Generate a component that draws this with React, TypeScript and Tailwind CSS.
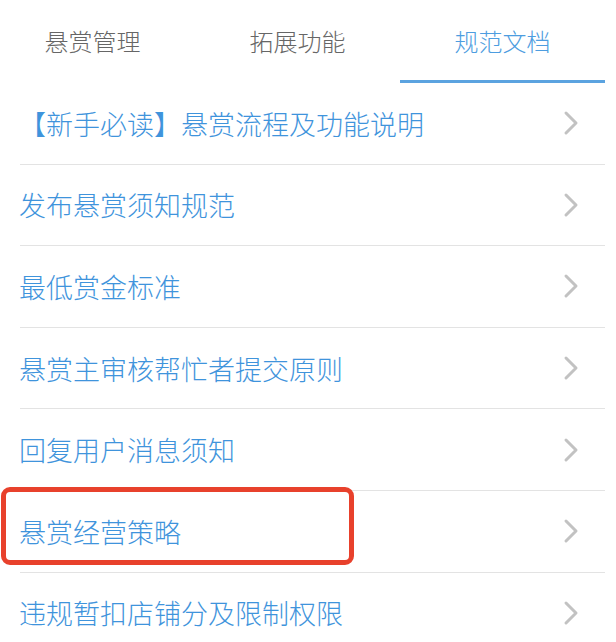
import { ChevronRight } from "lucide-react";

const tabs = ["悬赏管理", "拓展功能", "规范文档"];

const docs = [
  "【新手必读】悬赏流程及功能说明",
  "发布悬赏须知规范",
  "最低赏金标准",
  "悬赏主审核帮忙者提交原则",
  "回复用户消息须知",
  "悬赏经营策略",
  "违规暂扣店铺分及限制权限",
];

export default function App() {
  return (
    <div className="w-[616px] h-[642px] overflow-hidden bg-white font-['Noto_Sans_CJK_SC','Noto_Sans',sans-serif]">
      <div className="w-[605px]">
        {/* tab bar */}
        <div className="-ml-[10px] w-[615px] h-[83px] grid grid-cols-3">
          {tabs.map((t, i) => (
            <div key={t} className="relative flex items-center justify-center pb-[1px]">
              <span
                className={
                  i === 2
                    ? "text-[24px] font-light text-[#4d9de0]"
                    : "text-[24px] font-light text-[#666666]"
                }
              >
                {t}
              </span>
              {i === 2 && (
                <div className="absolute left-0 right-0 bottom-0 h-[3px] bg-[#5ba3e0]" />
              )}
            </div>
          ))}
        </div>

        {/* doc list */}
        <ul className="pl-[20px]">
          {docs.map((d, i) => (
            <li
              key={d}
              className="relative h-[81.6px] flex items-center justify-between border-b border-[#e3e3e3]"
            >
              <span className="text-[27px] font-light leading-none text-[#3f94dc] -ml-[1px]">
                {d}
              </span>
              <ChevronRight
                className="mr-[14px] text-[#c2c2c2]"
                size={40}
                strokeWidth={1.8}
              />
              {i === 5 && (
                <div className="absolute -left-[19px] top-[-4px] w-[353px] h-[78px] border-[5px] border-[#e8412c] rounded-[9px]" />
              )}
            </li>
          ))}
        </ul>
      </div>
    </div>
  );
}
